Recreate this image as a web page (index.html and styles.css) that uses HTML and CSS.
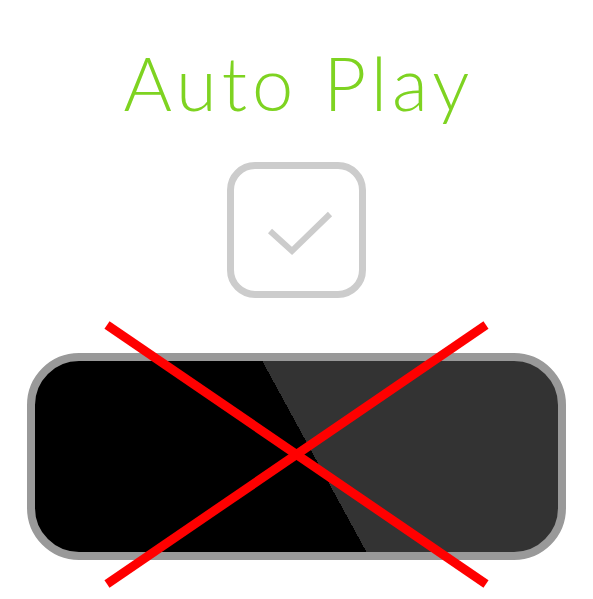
FILE: index.html
```html
<!DOCTYPE html>
<html>
<head>
<meta charset="utf-8">
<link rel="stylesheet" href="styles.css">
</head>
<body>
<main class="page">
  <h1 class="title">Auto Play</h1>
  <div class="checkbox">
    <svg class="check" width="76" height="54" viewBox="0 0 76 54"><polyline points="8,26 30,46 68,9" fill="none" stroke="#cccccc" stroke-width="6"/></svg>
  </div>
  <div class="button"></div>
  <svg class="cross" width="593" height="599" viewBox="0 0 593 599">
    <line x1="107" y1="325" x2="486" y2="584" stroke="#ff0000" stroke-width="9"/>
    <line x1="107" y1="584" x2="486" y2="325" stroke="#ff0000" stroke-width="9"/>
  </svg>
</main>
</body>
</html>
```
FILE: styles.css
```css
html, body {
  margin: 0;
  padding: 0;
  background: #ffffff;
}
.page {
  position: relative;
  width: 593px;
  height: 599px;
  display: flex;
  flex-direction: column;
  align-items: center;
}
.title {
  margin: 38px 0 0 0;
  padding-left: 5px;
  height: 90px;
  font-family: "Lato", "Liberation Sans", sans-serif;
  font-weight: 300;
  font-size: 74px;
  line-height: 90px;
  color: #7ed321;
  letter-spacing: 5px;
}
.checkbox {
  margin-top: 34px;
  box-sizing: border-box;
  width: 139px;
  height: 136px;
  border: 7px solid #cccccc;
  border-radius: 28px;
}
.check {
  display: block;
  margin-left: 28px;
  margin-top: 36px;
}
.button {
  margin-top: 55px;
  box-sizing: border-box;
  width: 539px;
  height: 207px;
  border: 8px solid #999999;
  border-radius: 52px;
  background: linear-gradient(61.4deg, #000000 291px, #333333 291px);
}
.cross {
  position: absolute;
  left: 0;
  top: 0;
}
```
